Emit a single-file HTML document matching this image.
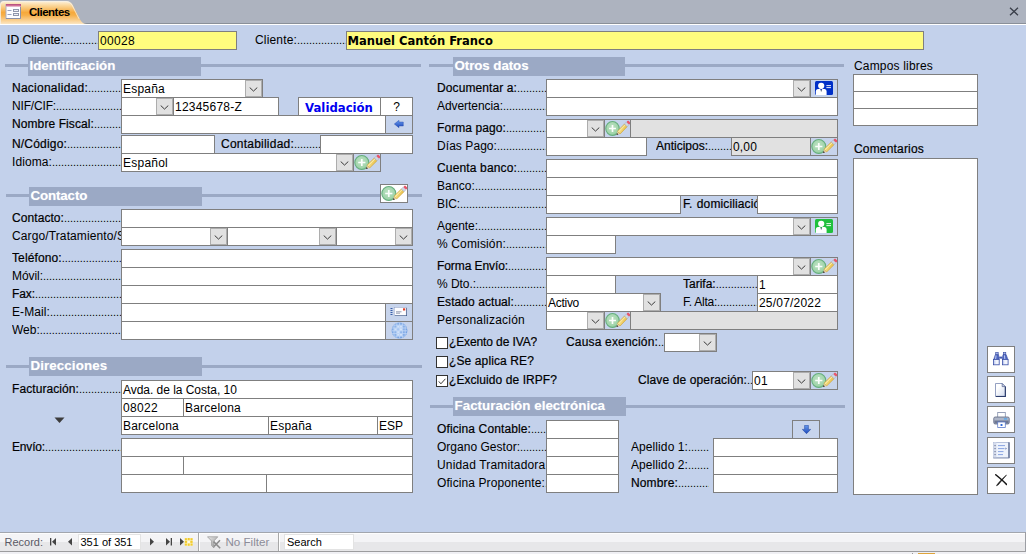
<!DOCTYPE html>
<html lang="es"><head><meta charset="utf-8"><title>Clientes</title>
<style>
html,body{margin:0;padding:0;}
body{width:1026px;height:554px;overflow:hidden;position:relative;background:#c3d1eb;
 font-family:"Liberation Sans",sans-serif;font-size:12px;color:#000;}
div,span{box-sizing:border-box;}
.abs,.f,.l,.sec,.ln,.cb,.btn,.ib,.dd{position:absolute;}
#tabbar{left:0;top:0;width:1026px;height:23px;background:#adb3bf;}
#tabline1{left:0;top:23px;width:1026px;height:1px;background:#8a9099;}
#tabline2{left:0;top:24px;width:1026px;height:1px;background:#fff;}
.f{background:#fff;border:1px solid #7f7f7f;height:19px;line-height:18px;padding:0 0 0 1px;
 white-space:nowrap;overflow:hidden;}
.f.y{background:#fffc7e;}
.f.g{background:#e1e1e1;}
.l{height:18px;line-height:18px;white-space:nowrap;overflow:hidden;}
.l.b{-webkit-text-stroke:0.2px #000;}
.l i{font-style:normal;font-size:11px;letter-spacing:-0.055px;-webkit-text-stroke:0;}
.sec{background:#9ba9c5;height:19px;line-height:17px;color:#fff;font-weight:bold;font-size:13.33px;
 padding-left:1.5px;white-space:nowrap;overflow:hidden;text-shadow:0 0 1px #c8d0e0;}
.ln{background:#9ba9c5;height:3px;}
.dd{width:17px;height:17px;background:#e1e1e1;border:1px solid #adadad;}
.dd svg{position:absolute;left:3px;top:6px;}
.ib{border:1px solid #7f7f7f;background:#c7d4ec;height:19px;}
.ib.w{background:#fff;}
.ib svg{position:absolute;}
.cb{width:12px;height:12px;border:1px solid #333;background:#fff;}
.btn{background:#fff;border:1px solid #7f7f7f;}
.btn svg{position:absolute;}
#nav{left:0;top:532px;width:1026px;height:22px;background:#f0f0f0;}
.nt{position:absolute;font-size:11px;white-space:nowrap;line-height:16px;}
</style></head>
<body>
<svg width="0" height="0" style="position:absolute">
<defs>
<linearGradient id="gtab" x1="0" y1="0" x2="0" y2="1">
 <stop offset="0" stop-color="#fdf3e0"/><stop offset="0.18" stop-color="#fbd9a0"/>
 <stop offset="0.5" stop-color="#f6a93c"/><stop offset="0.62" stop-color="#f7b04a"/>
 <stop offset="1" stop-color="#fce6c2"/>
</linearGradient>
<radialGradient id="ggreen" cx="0.45" cy="0.4" r="0.6">
 <stop offset="0" stop-color="#bde2c3"/><stop offset="0.8" stop-color="#a0d4aa"/><stop offset="1" stop-color="#7cc08f"/>
</radialGradient>
<linearGradient id="gpen" x1="0" y1="0" x2="1" y2="1">
 <stop offset="0" stop-color="#f8e596"/><stop offset="1" stop-color="#e8bf48"/>
</linearGradient>
<linearGradient id="garrow" x1="0" y1="0" x2="0" y2="1">
 <stop offset="0" stop-color="#6a9cf0"/><stop offset="1" stop-color="#1c47b8"/>
</linearGradient>
<radialGradient id="gglobe" cx="0.45" cy="0.45" r="0.6">
 <stop offset="0" stop-color="#a8c7f2"/><stop offset="1" stop-color="#6d9de0"/>
</radialGradient>
<symbol id="chev" viewBox="0 0 9 5"><path d="M0.7 0.5 L4.5 4.1 L8.3 0.5" fill="none" stroke="#3a3a3a" stroke-width="1"/></symbol>
<symbol id="addpen" viewBox="0 0 26 17" preserveAspectRatio="none">
 <circle cx="7.8" cy="8.5" r="7" fill="url(#ggreen)" stroke="#66ae7e" stroke-width="1.1"/>
 <path d="M7.8 4.9 V12.1 M4.2 8.5 H11.4" stroke="#ffffff" stroke-width="1.7" fill="none" opacity="0.95"/>
 <g transform="translate(11.9,15) rotate(-44.8)">
  <path d="M0 0 L3.4 -1.9 L3.4 1.9 Z" fill="#e9d2a6"/>
  <path d="M0 0 L1.9 -1.05 L1.9 1.05 Z" fill="#2e2e2e"/>
  <rect x="3.4" y="-1.95" width="10.4" height="3.9" fill="url(#gpen)" stroke="#c79a2c" stroke-width="0.5"/>
  <path d="M3.6 -0.7 H13.8" stroke="#fcf0b4" stroke-width="0.8"/>
  <rect x="13.8" y="-1.95" width="2.8" height="3.9" fill="#cfd6e4" stroke="#9aa4b8" stroke-width="0.4"/>
  <rect x="16.6" y="-1.95" width="2.4" height="3.9" rx="1" fill="#e9556a"/>
 </g>
</symbol>
<symbol id="card" viewBox="0 0 18 14">
 <rect x="0" y="0" width="18" height="14" rx="1.5" class="cbg"/>
 <circle cx="6.2" cy="4.8" r="3.1" fill="#fff"/>
 <path d="M0.8 14 V10.2 Q0.8 8.3 2.8 8.1 L5 7.9 L6.2 9.6 L7.4 7.9 L9.6 8.1 Q11.6 8.3 11.6 10.2 V14 Z" fill="#fff"/>
 <path d="M5.9 8.5 H6.5 L6.7 10 L6.2 10.8 L5.7 10 Z" fill="#3b4660"/>
 <path d="M11.4 4.6 H16 M11.4 6.6 H16" stroke="#fff" stroke-width="1" opacity="0.9"/>
</symbol>
</defs></svg>
<div class="abs" id="tabbar"></div><div class="abs" id="tabline1"></div><div class="abs" id="tabline2"></div>
<svg class="abs" style="position:absolute;left:0;top:0" width="90" height="25" viewBox="0 0 90 25">
<path d="M0 24 V5 Q0 1 4 1 H66 Q70.5 1 72.5 4.5 L80 19.5 Q82.5 24 87 24 Z" fill="url(#gtab)"/>
<path d="M0.5 24 V5 Q0.5 1.5 4 1.5 H66 Q70 1.5 72 5 L79 18.8" fill="none" stroke="#f6f0e6" stroke-width="1" opacity="0.8"/>
<g>
 <rect x="6" y="4.5" width="14.5" height="14" fill="#fdfdff" stroke="#a9afc2" stroke-width="1"/>
 <path d="M6 18.5 H20.5 V5" fill="none" stroke="#8a90a8" stroke-width="1"/>
 <rect x="6" y="4.2" width="15" height="1.6" fill="#bf3f73"/>
 <rect x="6" y="5.8" width="15" height="1" fill="#e3a2bc"/>
 <path d="M7.5 10.5 H11.5 M7.5 14.5 H11.5" stroke="#98a2c0" stroke-width="1"/>
 <rect x="13.5" y="9.5" width="5" height="2" fill="#eef0f6" stroke="#9096ac" stroke-width="1"/>
 <rect x="13.5" y="13.5" width="5" height="2" fill="#eef0f6" stroke="#9096ac" stroke-width="1"/>
</g>
</svg>
<div class="abs" style="left:29px;top:4px;font-weight:bold;font-size:11.5px;line-height:16px;letter-spacing:-0.5px">Clientes</div>
<svg class="abs" style="position:absolute;left:1009px;top:7px" width="10" height="9" viewBox="0 0 10 9"><path d="M1 0.8 L9 8.2 M9 0.8 L1 8.2" stroke="#3a3f4a" stroke-width="1.3" fill="none"/></svg>
<div class="l b" style="left:7px;top:31px;width:92px;letter-spacing:0.089px;">ID Cliente:<i>....................</i></div>
<div class="f y" style="left:98px;top:31px;width:139px;height:19px;letter-spacing:0.326px;">00028</div>
<div class="l" style="left:255px;top:31px;width:92px;letter-spacing:0.164px;">Cliente:<i>..............................</i></div>
<div class="f y" style="left:346px;top:31px;width:578px;height:19px;"><b style="font-family:'DejaVu Sans',sans-serif;font-size:11.55px;position:relative;top:-0.5px;left:-0.5px">Manuel Cantón Franco</b></div>
<div class="ln" style="left:5px;top:64px;width:416px"></div>
<div class="sec" style="left:28px;top:57px;width:173px;letter-spacing:0.0px">Identificación</div>
<div class="l b" style="left:12px;top:79px;width:110px;letter-spacing:0.253px;">Nacionalidad:<i>..............................</i></div>
<div class="f" style="left:121px;top:79px;width:142px;height:19px;letter-spacing:0.217px;">España</div>
<div class="dd" style="left:245px;top:80px"><svg width="9" height="5"><use href="#chev"/></svg></div>
<div class="l" style="left:12px;top:97px;width:110px;letter-spacing:-0.166px;">NIF/CIF:<i>........................................</i></div>
<div class="f" style="left:121px;top:97px;width:53px;height:19px;"></div>
<div class="dd" style="left:156px;top:98px"><svg width="9" height="5"><use href="#chev"/></svg></div>
<div class="f" style="left:173px;top:97px;width:106px;height:19px;letter-spacing:0.228px;">12345678-Z</div>
<div class="btn" style="left:298px;top:97px;width:84px;height:19px;line-height:18px;text-align:center;color:#0000f0;font-family:'DejaVu Sans',sans-serif;font-weight:bold;font-size:11.7px;padding-top:1px;padding-right:2px">Validación</div>
<div class="btn" style="left:380px;top:97px;width:33px;height:19px;line-height:19px;text-align:center;">?</div>
<div class="l b" style="left:12px;top:115px;width:110px;letter-spacing:0.094px;">Nombre Fiscal:<i>..............................</i></div>
<div class="f" style="left:121px;top:115px;width:265px;height:19px;"></div>
<div class="ib" style="left:385px;top:115px;width:28px"><svg width="10" height="8" viewBox="0 0 10 8" style="left:8px;top:4px"><path d="M0.3 4 L5 0.3 V2 H9.3 V6 H5 V7.7 Z" fill="url(#garrow)" stroke="#234aa8" stroke-width="0.4"/></svg></div>
<div class="l b" style="left:12px;top:135px;width:110px;letter-spacing:0.182px;">N/Código:<i>........................................</i></div>
<div class="f" style="left:121px;top:135px;width:94px;height:19px;"></div>
<div class="l b" style="left:221px;top:135px;width:100px;letter-spacing:0.227px;">Contabilidad:<i>....................</i></div>
<div class="f" style="left:320px;top:135px;width:93px;height:19px;"></div>
<div class="l" style="left:12px;top:153px;width:110px;letter-spacing:0.093px;">Idioma:<i>........................................</i></div>
<div class="f" style="left:121px;top:153px;width:233px;height:19px;letter-spacing:0.234px;">Español</div>
<div class="dd" style="left:336px;top:154px"><svg width="9" height="5"><use href="#chev"/></svg></div>
<div class="ib" style="left:353px;top:153px;width:28px;height:19px"><svg width="26" height="17" style="left:0;top:0"><use href="#addpen"/></svg></div>
<div class="ln" style="left:6px;top:194px;width:416px"></div>
<div class="sec" style="left:29px;top:187px;width:173px;letter-spacing:-0.13px">Contacto</div>
<div class="ib w" style="left:380px;top:184px;width:28px;height:19px"><svg width="26" height="17" style="left:0;top:0"><use href="#addpen"/></svg></div>
<div class="l b" style="left:12px;top:209px;width:110px;letter-spacing:0.071px;">Contacto:<i>........................................</i></div>
<div class="f" style="left:121px;top:209px;width:292px;height:19px;"></div>
<div class="l" style="left:12px;top:227px;width:110px;letter-spacing:0.117px;">Cargo/Tratamiento/Saludo:</div>
<div class="f" style="left:121px;top:227px;width:107px;height:19px;"></div>
<div class="dd" style="left:210px;top:228px"><svg width="9" height="5"><use href="#chev"/></svg></div>
<div class="f" style="left:227px;top:227px;width:110px;height:19px;"></div>
<div class="dd" style="left:319px;top:228px"><svg width="9" height="5"><use href="#chev"/></svg></div>
<div class="f" style="left:336px;top:227px;width:77px;height:19px;"></div>
<div class="dd" style="left:395px;top:228px"><svg width="9" height="5"><use href="#chev"/></svg></div>
<div class="l b" style="left:12px;top:249px;width:110px;letter-spacing:0.107px;">Teléfono:<i>........................................</i></div>
<div class="f" style="left:121px;top:249px;width:292px;height:19px;"></div>
<div class="l" style="left:12px;top:267px;width:110px;letter-spacing:-0.056px;">Móvil:<i>........................................</i></div>
<div class="f" style="left:121px;top:267px;width:292px;height:19px;"></div>
<div class="l b" style="left:12px;top:285px;width:110px;letter-spacing:-0.084px;">Fax:<i>........................................</i></div>
<div class="f" style="left:121px;top:285px;width:292px;height:19px;"></div>
<div class="l" style="left:12px;top:303px;width:110px;letter-spacing:0.095px;">E-Mail:<i>........................................</i></div>
<div class="f" style="left:121px;top:303px;width:265px;height:19px;"></div>
<div class="ib" style="left:385px;top:303px;width:28px"><svg width="18" height="11" viewBox="0 0 18 11" style="left:4px;top:3px">
<path d="M0.5 1.5 H2.5 M0.5 3.5 H2.5 M0.5 5.5 H2.5 M0.5 7.5 H2.5" stroke="#3a5fa8" stroke-width="1"/>
<rect x="5" y="1" width="12" height="8" fill="#2c4774"/>
<rect x="4.2" y="0.3" width="12" height="8" fill="#fdfdff" stroke="#8c9cc0" stroke-width="0.5"/>
<rect x="13" y="1.3" width="2.2" height="2.2" fill="#e0402a"/>
<path d="M6 4.8 H11.5 M6 6.2 H10" stroke="#8a92a8" stroke-width="0.9"/>
</svg></div>
<div class="l" style="left:12px;top:321px;width:110px;letter-spacing:-0.002px;">Web:<i>........................................</i></div>
<div class="f" style="left:121px;top:321px;width:265px;height:19px;"></div>
<div class="ib" style="left:385px;top:321px;width:28px"><svg width="17" height="17" viewBox="0 0 17 17" style="left:4.5px;top:-0.5px">
<defs><clipPath id="gc"><circle cx="8.5" cy="8.5" r="8"/></clipPath></defs>
<circle cx="8.5" cy="8.5" r="8" fill="url(#gglobe)"/>
<g clip-path="url(#gc)">
<g stroke="#c9dcf8" stroke-width="0.8" opacity="0.9"><path d="M0 3.2 H17 M0 6 H17 M0 8.8 H17 M0 11.6 H17 M0 14.2 H17 M3 0 V17 M5.8 0 V17 M8.6 0 V17 M11.4 0 V17 M14.2 0 V17"/></g>
<g fill="#e2edfc" opacity="0.8"><rect x="6.2" y="3.6" width="2" height="2"/><rect x="9" y="6.4" width="2" height="2"/><rect x="6.2" y="9.2" width="2" height="2"/><rect x="9" y="12" width="2" height="1.8"/><rect x="3.4" y="6.4" width="2" height="2"/><rect x="9" y="3.6" width="2" height="2"/><rect x="6.2" y="12" width="2" height="1.8"/></g>
</g>
</svg></div>
<div class="ln" style="left:6px;top:365px;width:416px"></div>
<div class="sec" style="left:29px;top:357px;width:173px;letter-spacing:0.1px">Direcciones</div>
<div class="l b" style="left:12px;top:380px;width:110px;letter-spacing:0.081px;">Facturación:<i>........................................</i></div>
<div class="f" style="left:121px;top:380px;width:292px;height:19px;letter-spacing:-0.035px;">Avda. de la Costa, 10</div>
<div class="f" style="left:121px;top:398px;width:63px;height:19px;letter-spacing:0.326px;">08022</div>
<div class="f" style="left:183px;top:398px;width:230px;height:19px;letter-spacing:0.218px;">Barcelona</div>
<div class="f" style="left:121px;top:416px;width:148px;height:19px;letter-spacing:0.218px;">Barcelona</div>
<div class="f" style="left:268px;top:416px;width:110px;height:19px;letter-spacing:0.217px;">España</div>
<div class="f" style="left:377px;top:416px;width:36px;height:19px;letter-spacing:-0.004px;">ESP</div>
<svg class="abs" style="position:absolute;left:54px;top:417px" width="11" height="7" viewBox="0 0 11 7"><path d="M0.5 0.5 H10.5 L5.5 6 Z" fill="#3c3c3c"/></svg>
<div class="l b" style="left:12px;top:438px;width:110px;letter-spacing:-0.17px;">Envío:<i>........................................</i></div>
<div class="f" style="left:121px;top:438px;width:292px;height:19px;"></div>
<div class="f" style="left:121px;top:456px;width:63px;height:19px;"></div>
<div class="f" style="left:183px;top:456px;width:230px;height:19px;"></div>
<div class="f" style="left:121px;top:474px;width:146px;height:19px;"></div>
<div class="f" style="left:266px;top:474px;width:147px;height:19px;"></div>
<div class="ln" style="left:429px;top:64px;width:415px"></div>
<div class="sec" style="left:453px;top:57px;width:172px;letter-spacing:-0.07px">Otros datos</div>
<div class="l b" style="left:437px;top:79px;width:110px;letter-spacing:0.1px;">Documentar a:<i>..............................</i></div>
<div class="f" style="left:546px;top:79px;width:265px;height:19px;"></div>
<div class="dd" style="left:793px;top:80px"><svg width="9" height="5"><use href="#chev"/></svg></div>
<div class="ib" style="left:810px;top:79px;width:28px"><svg width="18" height="14" style="left:4px;top:1px;fill:#0030c8"><use href="#card"/></svg></div>
<div class="l" style="left:437px;top:97px;width:110px;letter-spacing:-0.059px;">Advertencia:<i>..............................</i></div>
<div class="f" style="left:546px;top:97px;width:292px;height:19px;"></div>
<div class="l b" style="left:437px;top:119px;width:110px;letter-spacing:0.088px;">Forma pago:<i>..............................</i></div>
<div class="f" style="left:546px;top:119px;width:59px;height:19px;"></div>
<div class="dd" style="left:587px;top:120px"><svg width="9" height="5"><use href="#chev"/></svg></div>
<div class="f g" style="left:630px;top:119px;width:208px;height:19px;"></div>
<div class="ib" style="left:604px;top:119px;width:27px;height:19px"><svg width="25" height="17" style="left:0;top:0"><use href="#addpen"/></svg></div>
<div class="l" style="left:437px;top:137px;width:110px;letter-spacing:0.063px;">Días Pago:<i>..............................</i></div>
<div class="f" style="left:546px;top:137px;width:101px;height:19px;"></div>
<div class="l b" style="left:656px;top:137px;width:76px;letter-spacing:-0.003px;">Anticipos:<i>....................</i></div>
<div class="f g" style="left:731px;top:137px;width:80px;height:19px;letter-spacing:0.161px;">0,00</div>
<div class="ib" style="left:810px;top:137px;width:28px;height:19px"><svg width="26" height="17" style="left:0;top:0"><use href="#addpen"/></svg></div>
<div class="l b" style="left:437px;top:159px;width:110px;letter-spacing:0.149px;">Cuenta banco:<i>..............................</i></div>
<div class="f" style="left:546px;top:159px;width:292px;height:19px;"></div>
<div class="l" style="left:437px;top:177px;width:110px;letter-spacing:0.107px;">Banco:<i>........................................</i></div>
<div class="f" style="left:546px;top:177px;width:292px;height:19px;"></div>
<div class="l" style="left:437px;top:195px;width:110px;letter-spacing:-0.084px;">BIC:<i>..................................................</i></div>
<div class="f" style="left:546px;top:195px;width:135px;height:19px;"></div>
<div class="l b" style="left:683px;top:195px;width:74px;letter-spacing:0.116px;word-spacing:0.8px;">F. domiciliación:</div>
<div class="f" style="left:757px;top:195px;width:81px;height:19px;"></div>
<div class="l" style="left:437px;top:217px;width:110px;letter-spacing:-0.052px;">Agente:<i>........................................</i></div>
<div class="f" style="left:546px;top:217px;width:265px;height:19px;"></div>
<div class="dd" style="left:793px;top:218px"><svg width="9" height="5"><use href="#chev"/></svg></div>
<div class="ib" style="left:810px;top:217px;width:28px"><svg width="18" height="14" style="left:4px;top:1px;fill:#1fc03c"><use href="#card"/></svg></div>
<div class="l" style="left:437px;top:235px;width:110px;letter-spacing:0.15px;">% Comisión:<i>..............................</i></div>
<div class="f" style="left:546px;top:235px;width:70px;height:19px;"></div>
<div class="l b" style="left:437px;top:257px;width:110px;letter-spacing:-0.085px;">Forma Envío:<i>..............................</i></div>
<div class="f" style="left:546px;top:257px;width:265px;height:19px;"></div>
<div class="dd" style="left:793px;top:258px"><svg width="9" height="5"><use href="#chev"/></svg></div>
<div class="ib" style="left:810px;top:257px;width:28px;height:19px"><svg width="26" height="17" style="left:0;top:0"><use href="#addpen"/></svg></div>
<div class="l" style="left:437px;top:275px;width:110px;letter-spacing:-0.049px;">% Dto.:<i>........................................</i></div>
<div class="f" style="left:546px;top:275px;width:70px;height:19px;"></div>
<div class="l b" style="left:683px;top:275px;width:74px;letter-spacing:-0.001px;">Tarifa:<i>..............................</i></div>
<div class="f" style="left:757px;top:275px;width:81px;height:19px;letter-spacing:0.326px;">1</div>
<div class="l b" style="left:437px;top:293px;width:110px;letter-spacing:0.068px;">Estado actual:<i>..............................</i></div>
<div class="f" style="left:546px;top:293px;width:115px;height:19px;letter-spacing:-0.28px;">Activo</div>
<div class="dd" style="left:643px;top:294px"><svg width="9" height="5"><use href="#chev"/></svg></div>
<div class="l" style="left:683px;top:293px;width:74px;letter-spacing:-0.251px;">F. Alta:<i>..............................</i></div>
<div class="f" style="left:757px;top:293px;width:81px;height:19px;letter-spacing:0.194px;">25/07/2022</div>
<div class="l" style="left:437px;top:311px;width:110px;letter-spacing:0.219px;">Personalización</div>
<div class="f" style="left:546px;top:311px;width:59px;height:19px;"></div>
<div class="dd" style="left:587px;top:312px"><svg width="9" height="5"><use href="#chev"/></svg></div>
<div class="f g" style="left:630px;top:311px;width:208px;height:19px;"></div>
<div class="ib" style="left:604px;top:311px;width:27px;height:19px"><svg width="25" height="17" style="left:0;top:0"><use href="#addpen"/></svg></div>
<div class="cb" style="left:436px;top:337px"></div>
<div class="l b" style="left:449px;top:333px;letter-spacing:-0.115px;">¿Exento de IVA?</div>
<div class="l b" style="left:566px;top:333px;width:99px;letter-spacing:0.174px;">Causa exención:<i>..........</i></div>
<div class="f" style="left:664px;top:333px;width:53px;height:19px;"></div>
<div class="dd" style="left:699px;top:334px"><svg width="9" height="5"><use href="#chev"/></svg></div>
<div class="cb" style="left:436px;top:356px"></div>
<div class="l b" style="left:449px;top:352px;letter-spacing:0.116px;">¿Se aplica RE?</div>
<div class="cb" style="left:436px;top:375px"><svg width="10" height="10" viewBox="0 0 10 10" style="position:absolute;left:0;top:0"><path d="M1.8 5.4 L3.9 7.8 L8.4 2.8" fill="none" stroke="#3a3a3a" stroke-width="1"/></svg></div>
<div class="l b" style="left:449px;top:371px;letter-spacing:0.072px;">¿Excluido de IRPF?</div>
<div class="l b" style="left:638px;top:371px;width:115px;letter-spacing:0.119px;">Clave de operación:<i>..........</i></div>
<div class="f" style="left:752px;top:371px;width:59px;height:19px;letter-spacing:0.326px;">01</div>
<div class="dd" style="left:793px;top:372px"><svg width="9" height="5"><use href="#chev"/></svg></div>
<div class="ib" style="left:810px;top:371px;width:28px;height:19px"><svg width="26" height="17" style="left:0;top:0"><use href="#addpen"/></svg></div>
<div class="ln" style="left:430px;top:405px;width:415px"></div>
<div class="sec" style="left:453px;top:397px;width:173px;letter-spacing:0.04px">Facturación electrónica</div>
<div class="l b" style="left:437px;top:420px;width:110px;letter-spacing:0.115px;">Oficina Contable:<i>....................</i></div>
<div class="f" style="left:546px;top:420px;width:73px;height:19px;"></div>
<div class="l" style="left:437px;top:438px;width:110px;letter-spacing:0.021px;">Organo Gestor:<i>..............................</i></div>
<div class="f" style="left:546px;top:438px;width:73px;height:19px;"></div>
<div class="l" style="left:437px;top:456px;width:110px;letter-spacing:0.164px;">Unidad Tramitadora</div>
<div class="f" style="left:546px;top:456px;width:73px;height:19px;"></div>
<div class="l" style="left:437px;top:474px;width:110px;letter-spacing:0.102px;">Oficina Proponente:<i>..........</i></div>
<div class="f" style="left:546px;top:474px;width:73px;height:19px;"></div>
<div class="ib" style="left:792px;top:420px;width:28px"><svg width="9" height="9" viewBox="0 0 9 9" style="left:9px;top:4px"><path d="M4.5 8.7 L0.3 4.4 H2.6 V0.3 H6.4 V4.4 H8.7 Z" fill="url(#garrow)" stroke="#1b3f9c" stroke-width="0.5"/></svg></div>
<div class="l" style="left:631px;top:438px;width:78px;letter-spacing:0.087px;">Apellido 1:<i>....................</i></div>
<div class="f" style="left:713px;top:438px;width:125px;height:19px;"></div>
<div class="l" style="left:631px;top:456px;width:78px;letter-spacing:0.087px;">Apellido 2:<i>....................</i></div>
<div class="f" style="left:713px;top:456px;width:125px;height:19px;"></div>
<div class="l b" style="left:631px;top:474px;width:78px;letter-spacing:0.141px;">Nombre:<i>....................</i></div>
<div class="f" style="left:713px;top:474px;width:125px;height:19px;"></div>
<div class="l" style="left:854px;top:57px;letter-spacing:0.177px;">Campos libres</div>
<div class="f" style="left:853px;top:74px;width:125px;height:18px;"></div>
<div class="f" style="left:853px;top:91px;width:125px;height:18px;"></div>
<div class="f" style="left:853px;top:108px;width:125px;height:18px;"></div>
<div class="l b" style="left:854px;top:140px;letter-spacing:0.179px;">Comentarios</div>
<div class="f" style="left:853px;top:158px;width:125px;height:337px;"></div>
<div class="btn" style="left:987px;top:346px;width:28px;height:27px"><svg width="16" height="14" viewBox="0 0 16 14" style="left:5px;top:4.5px">
<rect x="2.7" y="0.4" width="2.5" height="2.4" fill="#9fb0e6" stroke="#3449a0" stroke-width="0.6"/><rect x="10.3" y="0.4" width="2.5" height="2.4" fill="#9fb0e6" stroke="#3449a0" stroke-width="0.6"/>
<path d="M2.2 2.8 H5.6 L6.2 7.4 H0.7 Z" fill="#4f67c0" stroke="#2f4398" stroke-width="0.5"/>
<path d="M9.9 2.8 H13.3 L14.9 7.4 H9.3 Z" fill="#4f67c0" stroke="#2f4398" stroke-width="0.5"/>
<path d="M3.1 3.4 L2.6 7 M11.4 3.4 L11.8 7" stroke="#b6c4f0" stroke-width="1.1"/>
<rect x="6.2" y="4.6" width="3.1" height="2" fill="#4359b0"/>
<rect x="0.5" y="7.4" width="5.7" height="5.4" fill="#f2f5fd" stroke="#364ca6" stroke-width="0.8"/>
<rect x="9.4" y="7.4" width="5.7" height="5.4" fill="#f2f5fd" stroke="#364ca6" stroke-width="0.8"/>
<path d="M1.8 8.3 V12 M10.7 8.3 V12" stroke="#b9c6ee" stroke-width="1"/>
</svg></div>
<div class="btn" style="left:987px;top:376px;width:28px;height:27px"><svg width="12" height="15" viewBox="0 0 12 15" style="left:6.5px;top:6px">
<defs><linearGradient id="gdoc" x1="0" y1="0" x2="1" y2="1"><stop offset="0.3" stop-color="#ffffff"/><stop offset="1" stop-color="#cfd8ec"/></linearGradient></defs>
<path d="M0.5 0.5 H7.2 L10.2 3.6 V13.3 H0.5 Z" fill="url(#gdoc)" stroke="#7a89b2" stroke-width="0.8"/>
<path d="M10.4 3.4 V13.5 H0.8" fill="none" stroke="#2c3c6c" stroke-width="1.1"/>
<path d="M7.2 0.5 V3.6 H10.2 Z" fill="#e8ecf6" stroke="#4a5a8c" stroke-width="0.7"/>
</svg></div>
<div class="btn" style="left:987px;top:406px;width:28px;height:27px"><svg width="17" height="16" viewBox="0 0 18 16" preserveAspectRatio="none" style="left:5.3px;top:4.5px">
<rect x="5" y="0.5" width="8" height="5" fill="#fff" stroke="#7f8aa8" stroke-width="0.8"/>
<rect x="0.8" y="5" width="16.4" height="7" rx="1.5" fill="#aeb6c8" stroke="#5b657f" stroke-width="0.8"/>
<rect x="1.5" y="8.5" width="15" height="3" fill="#6e7892"/>
<rect x="11.5" y="6.3" width="3.5" height="1.2" fill="#49a4ee"/>
<rect x="5" y="10" width="8" height="5.5" fill="#fff" stroke="#5b79c8" stroke-width="0.8"/>
<rect x="8" y="12" width="2" height="2" fill="#2f69d8"/>
</svg></div>
<div class="btn" style="left:987px;top:437px;width:28px;height:27px"><svg width="17" height="17" viewBox="0 0 17 17" style="left:5px;top:4px">
<rect x="0.4" y="0.4" width="15.6" height="15.4" fill="#eef3fc" stroke="#a9b6d4" stroke-width="0.8"/>
<rect x="0.4" y="0.4" width="3" height="15.4" fill="#d5dced"/>
<path d="M16 0.4 V16 " stroke="#2b3c6c" stroke-width="1"/>
<path d="M0.4 16 H16.4" stroke="#8490ac" stroke-width="0.8"/>
<path d="M5 3.6 H12 M5 6.6 H11.5 M5 9.6 H10.5 M5 12.6 H10" stroke="#7d9ade" stroke-width="0.9"/>
<path d="M1.5 3.6 H2.6 M1.5 6.6 H2.6 M1.5 9.6 H2.6 M1.5 12.6 H2.6" stroke="#5c6684" stroke-width="1"/>
<path d="M12.5 5.4 L13.8 6.6 L12.5 7.8 Z" fill="#55699e"/>
</svg></div>
<div class="btn" style="left:987px;top:467px;width:28px;height:27px"><svg width="12.2" height="12.6" viewBox="0 0 13 14" preserveAspectRatio="none" style="left:6.8px;top:6.2px">
<path d="M0.8 0.9 C3.5 3.2 8.5 7.5 12.3 11.6" stroke="#161616" stroke-width="1.6" fill="none" stroke-linecap="round"/>
<path d="M12.2 1.2 C9.5 3.6 5.2 8 2.6 11.4 L1.6 13 L3.6 11.9 C6 8.6 9.8 4.4 12.2 1.2 Z" fill="#161616" stroke="#161616" stroke-width="0.7" stroke-linejoin="round"/>
</svg></div>
<div class="abs" id="nav">
<div class="abs" style="left:0;top:0;width:1026px;height:1px;background:#a2a6ae"></div>
<div class="abs" style="left:0;top:1px;width:1025px;height:1px;background:#fdfdfd"></div>
<div class="abs" style="left:0;top:2px;width:1025px;height:8px;background:#f4f4f6"></div>
<div class="abs" style="left:0;top:10px;width:1025px;height:9px;background:#e7e7e9"></div>
<div class="abs" style="left:0;top:19px;width:1026px;height:1px;background:#9c9c9e"></div>
<div class="abs" style="left:1025px;top:0;width:1px;height:20px;background:#9c9ea4"></div>
<div class="abs" style="left:0;top:20px;width:1026px;height:2px;background:#f0f0f4"></div>
<div class="abs" style="left:912px;top:21px;width:1px;height:1px;background:#999"></div>
<div class="abs" style="left:918px;top:21px;width:17px;height:1px;background:#dfa43a"></div>
<div class="nt" style="left:4.5px;top:2px;color:#5a5a66;">Record:</div>
<svg class="abs" style="position:absolute;left:49px;top:6px" width="150" height="8" viewBox="0 0 150 8">
<g fill="#444">
<rect x="1" y="0" width="1.3" height="7.5"/><path d="M7 0 V7.5 L3 3.75 Z"/>
<path d="M23 0 V7.5 L19 3.75 Z"/>
<path d="M101 0 V7.5 L105 3.75 Z"/>
<path d="M117 0 V7.5 L121 3.75 Z"/><rect x="121.7" y="0" width="1.3" height="7.5"/>
<path d="M131 0 V7.5 L135 3.75 Z"/>
</g>
<g><rect x="135.8" y="0" width="7.8" height="7.8" fill="#fbf1c0"/>
<g fill="#f1cb2c"><rect x="135.8" y="0.2" width="2.1" height="2.1"/><rect x="138.7" y="0" width="2" height="2.3"/><rect x="141.5" y="0.2" width="2.1" height="2.1"/>
<rect x="135.8" y="2.9" width="2.3" height="2"/><rect x="141.3" y="2.9" width="2.3" height="2"/>
<rect x="135.8" y="5.5" width="2.1" height="2.1"/><rect x="138.7" y="5.5" width="2" height="2.3"/><rect x="141.5" y="5.5" width="2.1" height="2.1"/></g>
<rect x="138.6" y="2.8" width="2.2" height="2.2" fill="#fffbe6"/></g>
</svg>
<div class="abs" style="left:78px;top:2px;width:63px;height:16px;background:#fff;border:1px solid #e3e3e3"></div>
<div class="nt" style="left:80.5px;top:2px;color:#000;">351 of 351</div>
<div class="abs" style="left:198px;top:1px;width:1px;height:18px;background:#a8a8a8"></div><div class="abs" style="left:199px;top:1px;width:1px;height:18px;background:#fff"></div>
<svg class="abs" style="position:absolute;left:207px;top:4px" width="15" height="13" viewBox="0 0 15 13">
<defs><linearGradient id="gfun" x1="0" y1="0" x2="1" y2="1"><stop offset="0" stop-color="#ececec"/><stop offset="1" stop-color="#8e8e8e"/></linearGradient></defs>
<path d="M0.5 0.8 H10.8 L6.9 5 V12 L4.6 9.6 V5 Z" fill="url(#gfun)" stroke="#9c9c9c" stroke-width="0.8"/>
<path d="M6.6 5.6 L13.2 12.2 M13 4.2 L7 10.6" stroke="#8a8a8a" stroke-width="1.5" fill="none"/>
</svg>
<div class="nt" style="left:225.5px;top:2px;color:#8c8c98;font-size:11.6px">No Filter</div>
<div class="abs" style="left:278px;top:1px;width:1px;height:18px;background:#a8a8a8"></div><div class="abs" style="left:279px;top:1px;width:1px;height:18px;background:#fff"></div>
<div class="abs" style="left:284px;top:2px;width:70px;height:16px;background:#fff;border:1px solid #e3e3e3"></div>
<div class="nt" style="left:287px;top:2px;color:#000;">Search</div>
</div>
</body></html>
